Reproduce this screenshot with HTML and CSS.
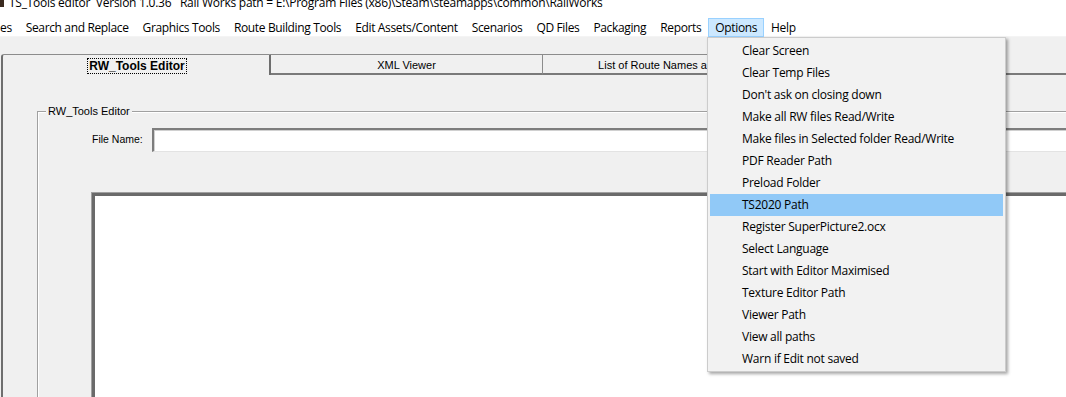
FILE: index.html
```html
<!DOCTYPE html>
<html>
<head>
<meta charset="utf-8">
<link rel="stylesheet" href="styles.css">
</head>
<body>
<div class="window">
  <div class="titlebar">
    <span class="appicon"></span>
    <span class="title">TS_Tools editor&nbsp; Version 1.0.36 &nbsp; Rail Works path = E:\Program Files (x86)\Steam\steamapps\common\RailWorks</span>
  </div>
  <div class="menubar">
    <span class="mi first">es</span>
    <span class="mi">Search and Replace</span>
    <span class="mi">Graphics Tools</span>
    <span class="mi">Route Building Tools</span>
    <span class="mi">Edit Assets/Content</span>
    <span class="mi">Scenarios</span>
    <span class="mi">QD Files</span>
    <span class="mi">Packaging</span>
    <span class="mi">Reports</span>
    <span class="mi open">Options</span>
    <span class="mi">Help</span>
  </div>
  <div class="client">
    <div class="tabstrip">
      <div class="tab active"><span class="focus">RW_Tools Editor</span></div>
      <div class="tab">XML Viewer</div>
      <div class="tab">List of Route Names and Folders</div>
      <div class="tabrest"></div>
    </div>
    <div class="panel">
      <div class="group">
        <div class="legend-row"><span class="legend">RW_Tools Editor</span></div>
        <div class="group-body">
          <div class="file-row">
            <span class="file-label">File Name:</span>
            <div class="input"></div>
          </div>
          <div class="textarea"></div>
        </div>
      </div>
    </div>
  </div>

  <div class="dropdown">
    <div class="di">Clear Screen</div>
    <div class="di">Clear Temp Files</div>
    <div class="di">Don't ask on closing down</div>
    <div class="di">Make all RW files Read/Write</div>
    <div class="di">Make files in Selected folder Read/Write</div>
    <div class="di">PDF Reader Path</div>
    <div class="di">Preload Folder</div>
    <div class="di hot">TS2020 Path</div>
    <div class="di">Register SuperPicture2.ocx</div>
    <div class="di">Select Language</div>
    <div class="di">Start with Editor Maximised</div>
    <div class="di">Texture Editor Path</div>
    <div class="di">Viewer Path</div>
    <div class="di">View all paths</div>
    <div class="di">Warn if Edit not saved</div>
  </div>
</div>
</body>
</html>
```

FILE: styles.css
```css
* { box-sizing: border-box; }
html, body {
  margin: 0;
  padding: 0;
  width: 1066px;
  height: 397px;
  overflow: hidden;
  background: #f0f0f0;
}
.window {
  position: relative;
  width: 1066px;
  height: 397px;
  overflow: hidden;
  display: flex;
  flex-direction: column;
  font-family: "Open Sans", "Noto Sans", sans-serif;
  font-size: 12px;
  color: #000;
}
.titlebar {
  height: 17px;
  background: #fff;
  display: flex;
  align-items: flex-start;
  overflow: hidden;
  flex: none;
}
.appicon {
  width: 4px;
  height: 7px;
  background: #3a2a20;
  flex: none;
}
.title {
  margin-left: 5px;
  margin-top: -5px;
  line-height: 16px;
  white-space: nowrap;
  letter-spacing: -0.25px;
}
.menubar {
  height: 20px;
  background: #fff;
  display: flex;
  align-items: flex-start;
  flex: none;
  border-bottom: 1px solid #f4f4f4;
}
.mi {
  height: 19px;
  margin-top: 1px;
  padding: 0 6px;
  line-height: 17px;
  white-space: nowrap;
  border: 1px solid transparent;
  letter-spacing: -0.36px;
}
.mi.first { margin-left: -7px; }
.mi.open {
  background: #cce8ff;
  border-color: #99d1ff;
}
.client {
  flex: 1;
  background: #f0f0f0;
  padding-top: 17px;
  display: flex;
  flex-direction: column;
  min-height: 0;
}
.tabstrip {
  height: 21px;
  display: flex;
  flex: none;
  font-family: "Liberation Sans", Arial, sans-serif;
  font-size: 11px;
}
.tab {
  width: 272px;
  height: 21px;
  flex: none;
  border-top: 1px solid #8c8c8c;
  border-right: 1px solid #8c8c8c;
  border-bottom: 2px solid #7a7a7a;
  text-align: center;
  line-height: 20px;
  background: #f0f0f0;
  white-space: nowrap;
  overflow: hidden;
}
.tab.active {
  width: 270px;
  margin-left: 1px;
  border-left: 2px solid #6e6e6e;
  border-right: 2px solid #6e6e6e;
  border-bottom: none;
  border-top-left-radius: 3px;
  font-weight: bold;
  font-size: 12px;
  line-height: 22px;
  padding-left: 2px;
}
.focus {
  outline: 1px dotted #000;
  outline-offset: 0px;
  padding: 0 1px;
}
.tabrest {
  flex: 1;
  border-bottom: 2px solid #7a7a7a;
}
.panel {
  flex: 1;
  margin-left: 1px;
  border-left: 2px solid #6e6e6e;
  padding-top: 36px;
  padding-left: 34px;
  display: flex;
  flex-direction: column;
  min-height: 0;
}
.group {
  flex: 1;
  display: flex;
  flex-direction: column;
  border-left: 1px solid #a0a0a0;
  box-shadow: inset 1px 0 0 #fff;
  min-height: 0;
}
.legend-row {
  height: 1px;
  border-top: 1px solid #a0a0a0;
  box-shadow: 0 1px 0 #fff;
  position: relative;
  display: flex;
}
.legend {
  margin-top: -8px;
  margin-left: 8px;
  height: 14px;
  padding: 0 2px;
  background: #f0f0f0;
  font-family: "Liberation Sans", Arial, sans-serif;
  font-size: 11px;
  line-height: 14px;
  color: #000;
}
.group-body {
  flex: 1;
  padding-left: 54px;
  padding-top: 15px;
  display: flex;
  flex-direction: column;
}
.file-row {
  display: flex;
  align-items: center;
  height: 25px;
}
.file-label {
  font-family: "Liberation Sans", Arial, sans-serif;
  font-size: 10.5px;
  width: 60px;
  flex: none;
  margin-top: -1px;
}
.input {
  width: 1000px;
  height: 24px;
  flex: none;
  background: #fff;
  border-top: 2px solid #7d7d7d;
  border-left: 2px solid #7d7d7d;
  border-bottom: 1px solid #e3e3e3;
  box-shadow: inset 1px 1px 0 #d0d0d0;
}
.textarea {
  margin-top: 41px;
  width: 1100px;
  height: 400px;
  flex: none;
  background: #fff;
  border-top: 3px solid #6a6a6a;
  border-left: 3px solid #6a6a6a;
  box-shadow: -1px -1px 0 #a0a0a0;
}
.dropdown {
  position: absolute;
  left: 707px;
  top: 37px;
  width: 299px;
  height: 335px;
  background: #f2f2f2;
  border: 1px solid #cccccc;
  padding: 2px 2px 1px 2px;
  box-shadow: 2px 2px 3px rgba(0,0,0,0.35);
}
.di {
  height: 22px;
  line-height: 21px;
  padding-left: 32px;
  white-space: nowrap;
  letter-spacing: -0.25px;
}
.di.hot { background: #91c9f7; }
```
